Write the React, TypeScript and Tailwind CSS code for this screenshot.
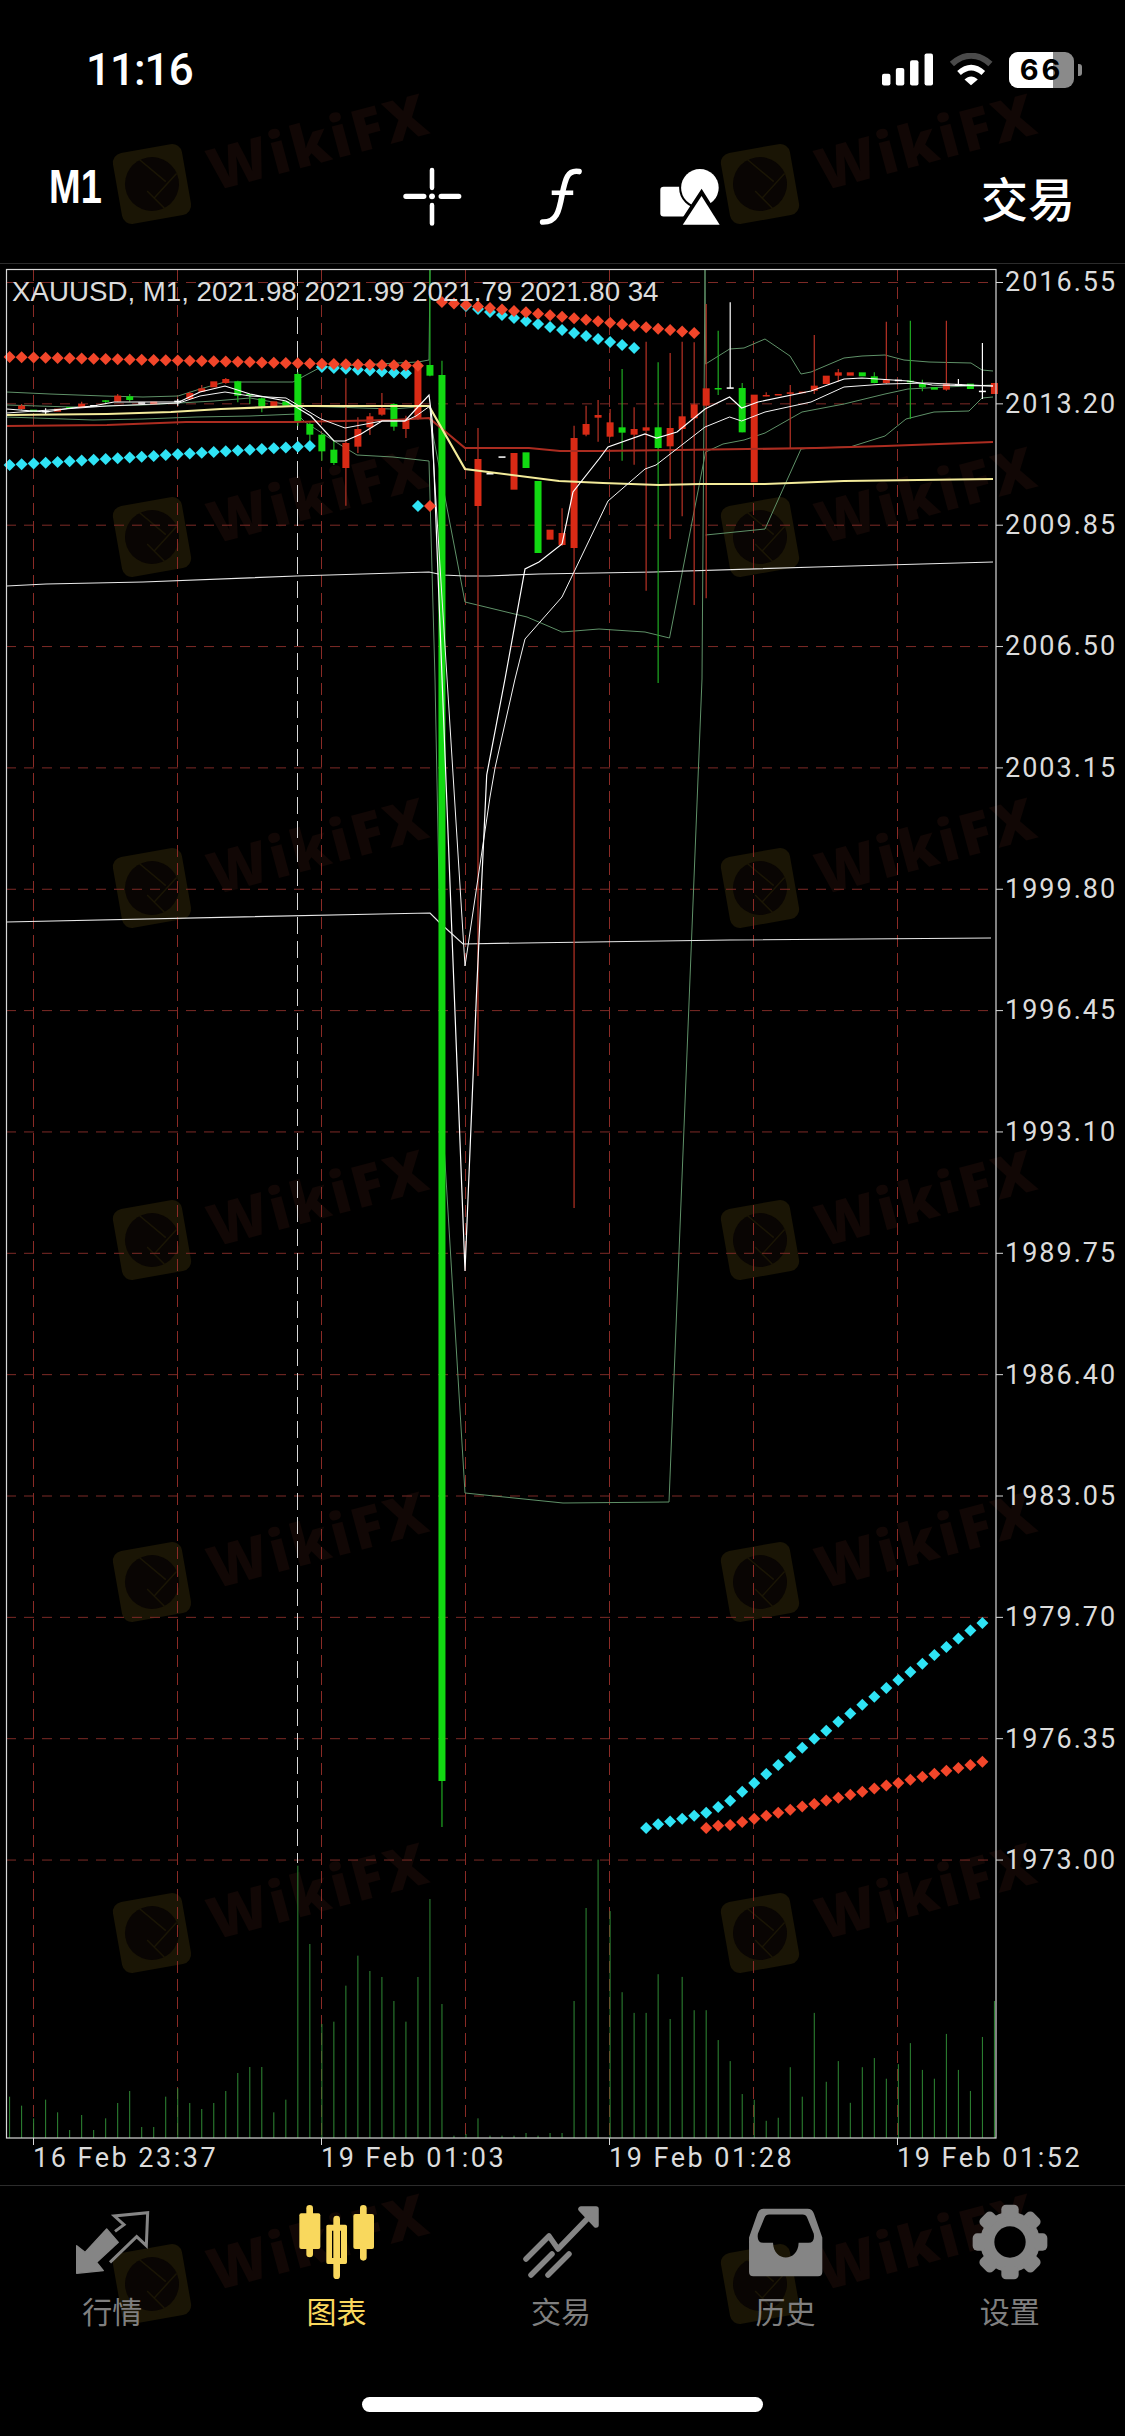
import React from "react";

// bar i sits at x = 9.6 + 12i on the chart
const barX = (i: number) => 9.6 + 12.01 * i;
// candle y values were read at 3x from y=260
const cy = (z: number) => 260 + z / 3;

const PRICES = ["2016.55", "2013.20", "2009.85", "2006.50", "2003.15", "1999.80", "1996.45", "1993.10", "1989.75", "1986.40", "1983.05", "1979.70", "1976.35", "1973.00"];
const TIMES = ["16 Feb 23:37", "19 Feb 01:03", "19 Feb 01:28", "19 Feb 01:52"];
const GRID_X = [33, 177, 321, 465, 609, 753, 897];
const priceY = (n: number) => 283.5 + n * 121.35;

const RED = "#d92a15";
const GREEN = "#12d912";

type Candle = [number, "r" | "g" | "w", number, number, number?, number?];

const CANDLES: Candle[] = [
  [1, "r", 440, 450, 435, 452], [2, "g", 452, 458], [3, "w", 455, 455, 448, 465], [4, "r", 449, 458],
  [5, "g", 444, 447], [6, "r", 435, 445, 428, 446], [7, "w", 438, 438], [8, "g", 424, 425, 424, 435],
  [9, "r", 410, 428, 405, 429], [10, "g", 412, 423, 405, 428], [11, "w", 430, 430], [12, "r", 428, 436],
  [14, "w", 425, 425, 420, 440], [15, "r", 402, 420, 398, 422], [16, "r", 388, 398, 378, 399], [17, "r", 367, 385],
  [18, "r", 360, 372, 357, 374], [19, "g", 367, 410, 365, 430], [20, "g", 405, 406, 405, 435], [21, "g", 418, 442, 415, 460],
  [22, "r", 427, 442], [23, "g", 427, 440], [24, "g", 345, 487, 340, 500], [25, "g", 495, 527, 490, 545],
  [26, "g", 527, 577, 525, 605], [27, "g", 572, 612, 545, 618], [28, "r", 552, 627, 358, 740], [29, "r", 510, 563, 475, 582],
  [30, "r", 472, 505, 462, 528], [31, "r", 447, 467, 402, 470], [32, "g", 435, 503, 433, 515], [33, "r", 483, 510, 470, 537],
  [34, "r", 325, 480, 320, 482], [35, "g", 318, 350, 30, 352], [36, "g", 348, 4566, 305, 4704], [39, "r", 600, 741, 507, 2451],
  [40, "w", 642, 642], [41, "w", 592, 592], [42, "r", 582, 692], [43, "g", 580, 627], [44, "g", 666, 882],
  [45, "r", 812, 842], [46, "r", 822, 858, 748, 860], [47, "r", 537, 867, 500, 2847], [48, "r", 495, 527, 440, 532],
  [49, "r", 468, 476, 423, 548], [50, "r", 490, 533, 450, 535], [51, "g", 505, 521, 330, 605], [52, "r", 510, 527, 445, 617],
  [53, "r", 505, 515, 248, 995], [54, "g", 505, 567, 310, 1272], [55, "r", 507, 562, 282, 840], [56, "r", 472, 510, 248, 772],
  [57, "r", 436, 478, 250, 1038], [58, "r", 388, 440, 135, 1018], [59, "g", 387, 388, 215, 408], [60, "w", 385, 385, 130, 388],
  [61, "g", 387, 520, 372, 520], [62, "r", 407, 670], [63, "r", 408, 409, 400, 412], [64, "r", 405, 406],
  [65, "r", 400, 402, 378, 570], [66, "r", 398, 399], [67, "r", 380, 395, 228, 405], [68, "r", 350, 375],
  [69, "r", 340, 350, 330, 368], [70, "r", 340, 350], [71, "g", 340, 352], [72, "g", 352, 372, 340, 373],
  [73, "r", 362, 372, 188, 375], [74, "w", 362, 362], [75, "g", 365, 370, 185, 480], [76, "g", 375, 385, 362, 397],
  [77, "g", 385, 392], [78, "r", 374, 392, 185, 395], [79, "w", 375, 375, 360, 380], [80, "g", 374, 390],
  [81, "w", 395, 395, 252, 420], [82, "r", 372, 405],
];

// volume tops, left half read at 3x from y=1840
const VOL_LEFT = [773, 800, 838, 782, 820, 873, 828, 873, 838, 792, 756, 864, 864, 773, 748, 792, 810, 792, 756, 702, 684, 684, 820, 782, 80, 315, 555, 548, 440, 350, 396, 414, 486, 548, 414, 180, 495, 890, 885, 838, 890, 890, 890, 882, 890, 882, 882, 486, 207, 62];
// right half read at 2.613x from y=1560
const VOL_RIGHT = [920, 1132, 1186, 1186, 1085, 1202, 1092, 1179, 1179, 1257, 1312, 1398, 1413, 1468, 1460, 1328, 1405, 1186, 1366, 1312, 1421, 1328, 1304, 1358, 1320, 1265, 1335, 1358, 1241, 1335, 1390, 1249, 1155];
const VOLUME_TOPS = [...VOL_LEFT.map((z) => 1840 + z / 3), ...VOL_RIGHT.map((z) => 1560 + z / 2.613)];

const CYAN_UP = [703, 693, 686, 679, 671, 663, 648, 632, 608, 585, 562, 538, 517, 493, 470, 449, 425, 404, 381, 360, 337, 316, 295, 274, 251, 230, 208, 187, 167];
const RED_UP = [703, 697, 695, 687, 679, 671, 663, 655, 647, 640, 631, 624, 616, 608, 600, 592, 585, 577, 569, 561, 553, 546, 538, 530];

const range = (a: number, b: number) => Array.from({ length: b - a + 1 }, (_, k) => a + k);

const cyanDots: [number, number][] = [
  ...range(0, 25).map((i): [number, number] => [barX(i), 466 - 0.76 * i]),
  ...range(26, 33).map((i): [number, number] => [barX(i), 368 + (i - 26) * 0.9]),
  [barX(34), 507],
  ...range(38, 52).map((i): [number, number] => [barX(i), 307 + (i - 38) * 3]),
  ...CYAN_UP.map((z, k): [number, number] => [barX(53 + k), 1560 + z / 2.613]),
];
const redDots: [number, number][] = [
  ...range(0, 34).map((i): [number, number] => [barX(i), 358 + i * 0.256]),
  [barX(35), 507],
  ...range(36, 57).map((i): [number, number] => [barX(i), 303 + (i - 36) * 1.48]),
  ...RED_UP.map((z, k): [number, number] => [barX(58 + k), 1560 + z / 2.613]),
];

const BAND_LINES = [
  "6.5,393 50,395 104,397 143,398 178,397 200,390 225,383 293,383 321,368 357,366 418,363 429,361 430,270",
  "705,270 705.6,365 729.6,350 744,349 765,340 790,357 801,375 811,373 844,359 862,357 885,356 904,361 929,363 971,364 982,371 993,372",
  "6.5,418 93,421 143,420 196,418 250,417 297,415 305,423 334,442 357,456 393,458 429,462 435,680 444,1146 465,1494 563,1504 669,1503 702,680 705,270",
  "705.6,536 765,530 801,450 811,449 850,448 885,437 906,420 934,413 969,412 982,399 993,398",
  "430,420 465,603 527,618 562,633 599,630 645,633 669.5,639 705.6,453 723,445 744,441 765,434 802,413 844,405 885,395 908,390 945,388 993,386",
  "6.5,406 71,408 143,406 179,404 214,402 250,399 296,407 332,408 393,410 429,407",
];
const FAST_WHITE = "6.5,410 46,413 71,409 93,407 114,403 179,403 200,393 225,387 250,395 286,402 311,417 334,442 345,442 361,435 382,422 405,422 416,410 429,396 432,420 465,1272 476.7,990 486.7,776 505,680 525,570 539,563 562,545 573,493 599,460 608,448 645,435 656.6,439 677,433 705,410 729.6,398 741.6,409 758,403 811,392 844,380 862,379 908,382 932,386 993,387";
const SLOW_WHITE = "6.5,414 107,407 179,404 200,397 225,393 250,397 286,399 321,420 345,429 382,422 405,422 416,417 430,407 465,967 490,798 495,769 515,680 525,640 562,598 608,502 645,470 656,466 705,428 729.6,418 741.6,422 765,413 811,403 844,388 885,385 927,384 993,387";
const RED_MA = "6.5,427 107,426 186,423 293,423 393,421 429,419 465,449 529,449 560,452 599,452 677,451 816,449 885,447 993,443";
const YELLOW_MA = "6.5,416 107,415 171,413 221,410 296,407 429,407 465,470 559,482 603,484 659,486 700,485 765,485 844,482 993,480";
const LONG_WHITE = "6.5,587 46,585 143,583 296,577 429,573 443,576 465,577 487,577 539,575 654,573 816,568 993,563";
const LONG_WHITE_2 = "6.5,923 380,915 430,914 440,924 463,945 523,944 730,941 991,939";

const diamond = ([x, y]: [number, number]) => `M${x - 6} ${y}L${x} ${y - 6}L${x + 6} ${y}L${x} ${y + 6}Z`;

function Chart() {
  return (
    <div className="relative shrink-0">
      <svg width={1005} height={1881} viewBox="0 265 1005 1881" className="block">
        {PRICES.map((_, n) => (
          <g key={n}>
            <line x1={6} x2={996} y1={priceY(n)} y2={priceY(n)} stroke="#7d2a26" strokeDasharray="10 8" />
            <line x1={996} x2={1003} y1={priceY(n)} y2={priceY(n)} stroke="#d8d8d8" />
          </g>
        ))}
        {GRID_X.map((x) => (
          <line key={x} x1={x + 0.5} x2={x + 0.5} y1={270} y2={2139} stroke="#8a2b26" strokeDasharray="12 6" />
        ))}
        <line x1={297.5} x2={297.5} y1={270} y2={1864} stroke="#d8d8d8" strokeDasharray="17 7" />

        {VOLUME_TOPS.map((top, i) => (
          <line key={i} x1={barX(i)} x2={barX(i)} y1={top} y2={2139} stroke="#2f8a35" />
        ))}

        {BAND_LINES.map((p, i) => (
          <polyline key={i} points={p} fill="none" stroke="#5f9168" strokeWidth={1} />
        ))}
        <polyline points={LONG_WHITE} fill="none" stroke="#e8e8e8" strokeWidth={1.2} />
        <polyline points={LONG_WHITE_2} fill="none" stroke="#e8e8e8" strokeWidth={1.2} />

        {CANDLES.map(([i, c, top, bottom, wickTop, wickBottom]) => {
          const x = barX(i);
          const fill = c === "r" ? RED : c === "g" ? GREEN : "#ffffff";
          const wick = c === "r" ? "#b83225" : c === "g" ? "#1faa22" : "#ffffff";
          return (
            <g key={i}>
              {wickTop !== undefined && wickBottom !== undefined && (
                <line x1={x} x2={x} y1={cy(wickTop)} y2={cy(wickBottom)} stroke={wick} strokeWidth={1.2} />
              )}
              <rect x={x - 3.5} y={cy(top)} width={7} height={Math.max(1.5, (bottom - top) / 3)} fill={fill} />
            </g>
          );
        })}

        <polyline points={RED_MA} fill="none" stroke="#ab2c20" strokeWidth={2.2} />
        <polyline points={YELLOW_MA} fill="none" stroke="#f3eb9a" strokeWidth={2.2} />
        <polyline points={SLOW_WHITE} fill="none" stroke="#f4f4f4" strokeWidth={1} />
        <polyline points={FAST_WHITE} fill="none" stroke="#ffffff" strokeWidth={1.2} />

        {cyanDots.map((d, i) => (
          <path key={i} d={diamond(d)} fill="#2fe3f5" />
        ))}
        {redDots.map((d, i) => (
          <path key={i} d={diamond(d)} fill="#f2462a" />
        ))}

        <rect x={6.5} y={270.5} width={989.5} height={1868.5} fill="none" stroke="#d8d8d8" strokeWidth={1.2} />
        {[33, 321, 609, 897].map((x) => (
          <line key={x} x1={x + 0.5} x2={x + 0.5} y1={2139} y2={2146} stroke="#d8d8d8" />
        ))}
      </svg>
      <span className="absolute left-[12px] top-[12px] whitespace-nowrap text-[27.7px] leading-[32px] text-[#dcdcdc] font-['Liberation_Sans',sans-serif]">
        XAUUSD, M1, 2021.98 2021.99 2021.79 2021.80 34
      </span>
    </div>
  );
}

const WATERMARK_ROWS = [184, 537, 888, 1240, 1582, 1933, 2284];

function Watermarks() {
  return (
    <svg width={1125} height={2436} className="absolute inset-0">
      {WATERMARK_ROWS.flatMap((y) =>
        [152, 760].map((x) => (
          <g key={`${x}-${y}`} transform={`translate(${x} ${y}) rotate(-10)`}>
            <rect x={-35} y={-36} width={70} height={72} rx={10} fill="#1a1505" />
            <circle cx={0} cy={0} r={27} fill="#090503" />
            <path d="M-8 -26L14 0M26 -6L0 14M8 26L-6 6" stroke="#1a1505" strokeWidth={1.5} fill="none" />
            <text
              x={60}
              y={18}
              transform="rotate(-5 60 18)"
              fontFamily="Open Sans, sans-serif"
              fontWeight={800}
              fontSize={58}
              letterSpacing={3}
              fill="#110705"
            >
              WikiFX
            </text>
          </g>
        )),
      )}
    </svg>
  );
}

function Signal() {
  return (
    <svg width={51} height={33} viewBox="37 39 151 97" fill="#fff">
      <rect x={37} y={100} width={25} height={35} rx={6} />
      <rect x={78} y={83} width={25} height={52} rx={6} />
      <rect x={120} y={60} width={25} height={75} rx={6} />
      <rect x={163} y={40} width={25} height={95} rx={6} />
    </svg>
  );
}

function Wifi() {
  return (
    <svg width={46} height={33} viewBox="232 36 140 102" fill="none">
      <path d="M243 70C280 36 325 36 362 70" stroke="#4a4a4a" strokeWidth={19} />
      <path d="M265 98C290 76 315 76 340 98" stroke="#fff" strokeWidth={17} />
      <path d="M282 118C295 106 310 106 323 118L302 136Z" fill="#fff" />
    </svg>
  );
}

function Battery() {
  return (
    <div className="flex items-center gap-[4px]">
      <div className="relative w-[65px] h-[36px] rounded-[9px] overflow-hidden bg-[#8a8a8a]">
        <div className="absolute inset-y-0 left-0 w-[44px] bg-white" />
        <div className="relative h-full flex items-center justify-center text-[29px] font-bold tracking-[3px] text-black font-['Inter',sans-serif]">
          66
        </div>
      </div>
      <div className="w-[4px] h-[12px] rounded-r-[3px] bg-[#8a8a8a]" />
    </div>
  );
}

function Crosshair() {
  return (
    <svg width={62} height={62} viewBox="30 35 190 190" stroke="#fff" strokeLinecap="round" fill="none">
      <path d="M45 128H100M153 128H207" strokeWidth={16} />
      <path d="M125 47V102M125 155V211" strokeWidth={14} />
      <circle cx={125} cy={128} r={9} fill="#fff" stroke="none" />
    </svg>
  );
}

function FunctionIcon() {
  return (
    <svg width={44} height={60} viewBox="445 38 135 180" stroke="#fff" fill="none">
      <path d="M568 50C532 44 526 72 516 120C506 176 498 206 456 205" strokeWidth={17} strokeLinecap="round" />
      <path d="M484 115H550" strokeWidth={14} />
    </svg>
  );
}

function ShapesIcon() {
  return (
    <svg width={62} height={60} viewBox="806 38 188 180">
      <rect x={810} y={97} width={90} height={90} rx={10} fill="#fff" />
      <circle cx={930} cy={100} r={57} fill="#fff" stroke="#000" strokeWidth={12} paintOrder="stroke" />
      <path d="M935 125L990 212H878Z" fill="#fff" stroke="#000" strokeWidth={24} paintOrder="stroke" />
    </svg>
  );
}

function MarketIcon() {
  return (
    <svg width={75} height={65} viewBox="40 48 225 195" fill="none">
      <path d="M45 155V238L125 230L105 205L170 145L135 105L70 175Z" fill="#858585" stroke="#858585" strokeWidth={4} strokeLinejoin="round" />
      <path d="M145 205L225 128L254 155L258 56L158 66L187 92L160 112" stroke="#858585" strokeWidth={9} />
    </svg>
  );
}

function ChartIcon() {
  return (
    <svg width={80} height={76} viewBox="710 30 240 228" fill="#f9d85d">
      <rect x={738} y={33} width={20} height={157} rx={10} />
      <rect x={717} y={58} width={63} height={107} rx={6} />
      <rect x={819} y={65} width={20} height={190} rx={10} />
      <path fillRule="evenodd" d="M803 92H855Q860 92 860 97V205Q860 210 855 210H803Q798 210 798 205V97Q798 92 803 92ZM815 110V192H842V110Z" />
      <rect x={899} y={33} width={20} height={167} rx={10} />
      <rect x={879} y={60} width={62} height={105} rx={6} />
    </svg>
  );
}

function TradeIcon() {
  return (
    <svg width={84} height={78} viewBox="520 2204 84 78" fill="none" stroke="#858585" strokeWidth={5.5} strokeLinecap="round" strokeLinejoin="round">
      <path d="M527 2260L550 2237L559 2250L590 2218" />
      <path d="M532 2276L553 2255" />
      <path d="M549 2276L570 2255" />
      <path d="M582 2210H597V2226Z" fill="#858585" />
    </svg>
  );
}

function HistoryIcon() {
  return (
    <svg width={75} height={69} viewBox="24 40 228 210">
      <path
        fillRule="evenodd"
        fill="#858585"
        d="M72 42H205Q220 42 225 58L250 130V235Q250 248 237 248H40Q27 248 27 235V130L52 58Q57 42 72 42ZM88 60Q78 60 74 70L54 118Q50 146 70 146H100C102 206 176 206 178 146H208Q228 146 224 118L204 70Q200 60 190 60Z"
      />
    </svg>
  );
}

function GearIcon() {
  return (
    <svg width={76} height={76} viewBox="-114 -114 228 228">
      <circle r={90} fill="#858585" />
      {[0, 45, 90, 135, 180, 225, 270, 315].map((a) => (
        <rect key={a} x={-26} y={-112} width={52} height={40} rx={14} fill="#858585" transform={`rotate(${a})`} />
      ))}
      <circle r={47} fill="#000" />
    </svg>
  );
}

const TABS = [
  { label: "行情", icon: <MarketIcon /> },
  { label: "图表", icon: <ChartIcon />, active: true },
  { label: "交易", icon: <TradeIcon /> },
  { label: "历史", icon: <HistoryIcon /> },
  { label: "设置", icon: <GearIcon /> },
];

export default function App() {
  return (
    <div className="relative w-[1125px] h-[2436px] overflow-hidden bg-black text-white font-['Roboto',sans-serif]">
      <Watermarks />

      <div className="relative flex flex-col h-full">
        <div className="h-[130px] shrink-0 flex items-center pl-[86px] pr-[43px] pt-[9px]">
          <span className="text-[44px] font-medium leading-none tracking-[-1px]">11:16</span>
          <div className="ml-auto flex items-center gap-[15px]">
            <Signal />
            <Wifi />
            <Battery />
          </div>
        </div>

        <div className="h-[134px] shrink-0 flex items-center pl-[49px] border-b border-[#2c2c2c]">
          <span className="w-[52px] -translate-y-[10px] text-[38px] font-bold leading-none scale-y-[1.25] font-['Liberation_Sans',sans-serif]">M1</span>
          <div className="ml-[300px]"><Crosshair /></div>
          <div className="ml-[76px]"><FunctionIcon /></div>
          <div className="ml-[76px]"><ShapesIcon /></div>
          <span className="ml-[260px] text-[47px] font-medium leading-none font-['Noto_Sans_CJK_SC',sans-serif]">交易</span>
        </div>

        <div className="flex h-[1881px] shrink-0">
          <Chart />
          <div className="-mt-[42px] flex-1 flex flex-col text-[27px] tracking-[2px] text-[#dcdcdc]">
            {PRICES.map((p) => (
              <div key={p} className="h-[121.35px] shrink-0 flex items-center">{p}</div>
            ))}
          </div>
        </div>

        <div className="h-[41px] shrink-0 flex pl-[33px] border-b border-[#2c2c2c] text-[27px] leading-none tracking-[2.5px] text-[#dcdcdc]">
          {TIMES.map((t) => (
            <span key={t} className="w-[288px] shrink-0 whitespace-nowrap">{t}</span>
          ))}
        </div>

        <div className="w-[1122px] grid grid-cols-5 pt-[17px]">
          {TABS.map((tab) => (
            <div key={tab.label} className="flex flex-col items-center">
              <div className="h-[78px] flex items-center justify-center">{tab.icon}</div>
              <span
                className={
                  tab.active
                    ? "mt-[12px] text-[30px] leading-[34px] font-['Noto_Sans_CJK_SC',sans-serif] text-[#f9d85d]"
                    : "mt-[12px] text-[30px] leading-[34px] font-['Noto_Sans_CJK_SC',sans-serif] text-[#7f7f7f]"
                }
              >
                {tab.label}
              </span>
            </div>
          ))}
        </div>

        <div className="mt-auto mb-[24px] mx-auto w-[401px] h-[15px] rounded-full bg-white" />
      </div>
    </div>
  );
}
